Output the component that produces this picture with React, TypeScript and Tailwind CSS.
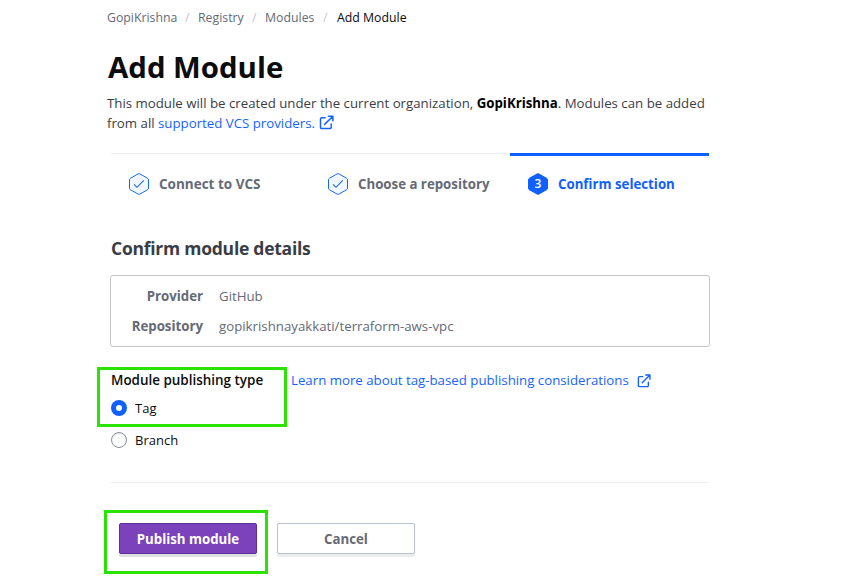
import React from "react";

function ExternalIcon({ className }: { className: string }) {
  return (
    <svg className={className} viewBox="0 0 16 16" fill="none" stroke="currentColor" strokeWidth="1.6" strokeLinecap="round" strokeLinejoin="round">
      <path d="M6.500 3H2.800a1.200 1.200 0 0 0-1.200 1.200v9a1.200 1.200 0 0 0 1.200 1.200h9a1.200 1.200 0 0 0 1.200-1.200V9.500" />
      <path d="M10 1.200h4.800V6M14.500 1.500 6 10" />
    </svg>
  );
}

function StepIcon({ active }: { active?: boolean }) {
  return (
    <svg className="h-[22px] w-5 shrink-0" viewBox="0 0 20 22" fill="none">
      <path
        d="M9.1.9a1.8 1.8 0 0 1 1.8 0l7.6 4.3a1.8 1.8 0 0 1 1 1.6v8.4a1.8 1.8 0 0 1-1 1.6l-7.6 4.3a1.8 1.8 0 0 1-1.8 0l-7.6-4.3a1.8 1.8 0 0 1-1-1.6V6.800a1.8 1.8 0 0 1 1-1.600z"
        fill={active ? "#1060ff" : "#f2f8ff"}
        stroke={active ? "#1060ff" : "#1c68ec"}
      />
      {active ? (
        <text x="10" y="15.300" textAnchor="middle" fill="#fff" className="font-['Open_Sans',sans-serif] text-[12px] font-semibold">3</text>
      ) : (
        <path d="m5 11.300 3 3 6.800-7" stroke="#1c68ec" strokeWidth="1.1" />
      )}
    </svg>
  );
}

export default function App() {
  return (
    <div className="h-[582px] w-[856px] overflow-hidden bg-white font-['Open_Sans','Noto_Sans',sans-serif] text-[13.26px] leading-5 text-[#3b3d45] whitespace-nowrap">
      <main className="flex w-[710px] flex-col pl-[107px]">
        <nav className="mt-2 flex h-5 items-center text-[12.3px] text-[#656a76]">
          <span className="w-[78px]">GopiKrishna</span>
          <span className="w-[13px] text-[#c2c5cb]">/</span>
          <span className="w-[54px]">Registry</span>
          <span className="w-[13px] text-[#c2c5cb]">/</span>
          <span className="w-[58px]">Modules</span>
          <span className="w-[14px] text-[#c2c5cb]">/</span>
          <span className="text-[#0c0c0e]">Add Module</span>
        </nav>
        <h1 className="mt-[19px] h-10 pl-px text-[29.4px] leading-10 font-bold text-[#0c0c0e]">Add Module</h1>
        <div className="mt-1.5 h-[60px]">
          <p>
            This module will be created under the current organization, <b className="text-black">GopiKrishna</b>. Modules can be added
          </p>
          <p className="flex items-center">
            <span>from all&nbsp;</span>
            <a className="flex items-center text-[#1563ff]">
              supported VCS providers.
              <ExternalIcon className="mb-0.5 ml-1 size-[15px]" />
            </a>
          </p>
        </div>
        <ol className="ml-1 flex h-[52px] font-bold text-[#656a76]">
          <li className="flex w-[200px] items-center gap-2.5 border-t border-[#ededef] pt-[9px] pl-[18px]">
            <StepIcon />
            <span className="text-[13.5px]">Connect to VCS</span>
          </li>
          <li className="flex w-[199px] items-center gap-2.5 border-t border-[#ededef] pt-[9px] pl-[17px]">
            <StepIcon />
            <span>Choose a repository</span>
          </li>
          <li className="flex w-[199px] items-center gap-2.5 border-t-3 border-[#1060ff] pt-[7px] pl-[18px] text-[#1060ff]">
            <StepIcon active />
            <span>Confirm selection</span>
          </li>
        </ol>
        <h2 className="mt-[31px] ml-1 h-6 text-[17.5px] leading-6 font-bold tracking-[-0.25px] text-[#3b3d45]">Confirm module details</h2>
        <dl className="mt-[15px] ml-[3px] grid h-[72px] w-[600px] grid-cols-[92px_1fr] content-start gap-x-4 gap-y-2.5 rounded-[3px] border border-[#c2c5cb] pt-2.5 text-[#656a76]">
          <dt className="text-right font-bold">Provider</dt>
          <dd>GitHub</dd>
          <dt className="text-right font-bold">Repository</dt>
          <dd>gopikrishnayakkati/terraform-aws-vpc</dd>
        </dl>
        <section className="relative mt-[23px] ml-1 text-[#0c0c0e]">
          <div className="flex h-5 items-center">
            <h3 className="w-[180px] text-[13.45px] font-semibold">Module publishing type</h3>
            <a className="flex items-center text-[#1563ff]">
              <span className="w-[346px]">Learn more about tag-based publishing considerations</span>
              <ExternalIcon className="mt-0.5 size-3.5" />
            </a>
          </div>
          <label className="mt-2 flex h-5 items-center gap-2">
            <span className="flex size-4 items-center justify-center rounded-full bg-[#1060ff]">
              <span className="size-1.5 rounded-full bg-white" />
            </span>
            <span className="text-[13px]">Tag</span>
          </label>
          <label className="mt-3 flex h-5 items-center gap-2">
            <span className="size-4 rounded-full border border-[#8c909c] bg-white shadow-[inset_0_1px_2px_#656a7633]" />
            <span className="text-[13px]">Branch</span>
          </label>
          <div className="pointer-events-none absolute -top-[3px] -left-[14px] h-[60px] w-[190px] border-3 border-[#2be300]" />
        </section>
        <hr className="mt-8 ml-1 w-[597px] border-t border-[#ededef]" />
        <div className="relative mt-10 ml-3 flex gap-5">
          <button className="h-[31px] w-[138px] rounded-[2px] border border-[#5f2f99] bg-[#7b42bc] font-bold text-white shadow-[0_3px_1px_#dddfe3]">Publish module</button>
          <button className="h-[31px] w-[138px] rounded-[2px] border border-[#bac1cc] bg-white font-bold text-[#656a76] shadow-[0_3px_1px_#ebecee]">Cancel</button>
          <div className="pointer-events-none absolute -top-[13px] -left-[15px] h-[64px] w-[164px] border-3 border-[#2be300]" />
        </div>
      </main>
    </div>
  );
}
